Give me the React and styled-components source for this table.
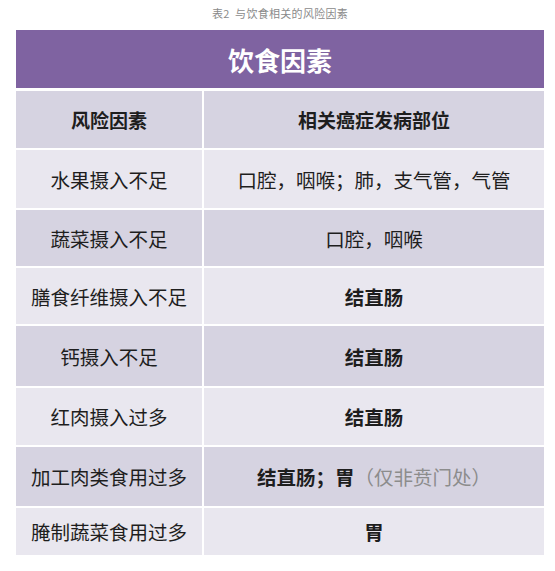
import React from "react";
import styled, { createGlobalStyle } from "styled-components";

const Global = createGlobalStyle`
  html, body { margin: 0; padding: 0; background: #ffffff; }
  body { font-family: "Noto Sans CJK SC", "Noto Sans", sans-serif; }
`;

const Page = styled.div`
  width: 555px;
  height: 571px;
  display: flex;
  flex-direction: column;
  align-items: flex-start;
  padding-left: 16px;
  box-sizing: border-box;
`;

const Caption = styled.div`
  width: 528px;
  height: 30px;
  display: flex;
  align-items: center;
  justify-content: center;
  font-size: 11px;
  color: #8a8a8a;
  letter-spacing: 0.3px;
  padding-bottom: 5px;
  box-sizing: border-box;
`;

const TitleBar = styled.div`
  width: 528px;
  height: 58px;
  background: #7f63a1;
  color: #ffffff;
  display: flex;
  align-items: center;
  justify-content: center;
  font-size: 26px;
  font-weight: 700;
  margin-bottom: 3px;
`;

const Grid = styled.div`
  display: grid;
  grid-template-columns: 186px 340px;
  column-gap: 2px;
  row-gap: 2px;
  background: #ffffff;
`;

const Cell = styled.div`
  height: ${(p) => p.$h}px;
  background: ${(p) => (p.$dark ? "#d6d3e1" : "#e9e7ef")};
  display: flex;
  align-items: center;
  justify-content: center;
  font-size: ${(p) => (p.$head ? 19 : 19.5)}px;
  font-weight: ${(p) => (p.$head ? 700 : 400)};
  color: #1e1e1e;
  white-space: nowrap;
`;

const Strong = styled.span`
  font-weight: 700;
`;

const Muted = styled.span`
  color: #8c8c8c;
`;

const rows = [
  { h: 58, factor: "水果摄入不足", site: "口腔，咽喉；肺，支气管，气管" },
  { h: 56, factor: "蔬菜摄入不足", site: "口腔，咽喉" },
  { h: 56, factor: "膳食纤维摄入不足", site: <Strong>结直肠</Strong> },
  { h: 60, factor: "钙摄入不足", site: <Strong>结直肠</Strong> },
  { h: 57, factor: "红肉摄入过多", site: <Strong>结直肠</Strong> },
  {
    h: 59,
    factor: "加工肉类食用过多",
    site: (
      <>
        <Strong>结直肠；胃</Strong>
        <Muted>（仅非贲门处）</Muted>
      </>
    ),
  },
  { h: 47, factor: "腌制蔬菜食用过多", site: <Strong>胃</Strong> },
];

export default function App() {
  return (
    <Page>
      <Global />
      <Caption>表2&nbsp;&nbsp;与饮食相关的风险因素</Caption>
      <TitleBar>饮食因素</TitleBar>
      <Grid>
        <Cell $h={57} $dark $head>风险因素</Cell>
        <Cell $h={57} $dark $head>相关癌症发病部位</Cell>
        {rows.map((r, i) => (
          <React.Fragment key={i}>
            <Cell $h={r.h} $dark={i % 2 === 1}>{r.factor}</Cell>
            <Cell $h={r.h} $dark={i % 2 === 1}>{r.site}</Cell>
          </React.Fragment>
        ))}
      </Grid>
    </Page>
  );
}
